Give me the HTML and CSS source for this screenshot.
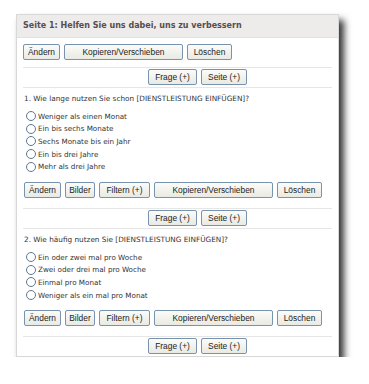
FILE: index.html
```html
<!DOCTYPE html>
<html lang="de">
<head>
  <meta charset="UTF-8" />
  <title>Umfrage bearbeiten</title>
  <link rel="stylesheet" href="styles.css">
</head>
<body>
  <div class="panel">
    <div class="page-title">Seite 1: Helfen Sie uns dabei, uns zu verbessern</div>
    <div class="page-body">
      <div class="btn-row first">
        <button class="btn w-edit">Ändern</button>
        <button class="btn w-copy">Kopieren/Verschieben</button>
        <button class="btn w-del">Löschen</button>
      </div>
      <div class="add-row">
        <button class="btn w-q">Frage (+)</button>
        <button class="btn w-p">Seite (+)</button>
      </div>

      <div class="question">
        <div class="q-text">1. Wie lange nutzen Sie schon [DIENSTLEISTUNG EINFÜGEN]?</div>
        <ul class="options">
          <li><span class="radio"></span>Weniger als einen Monat</li>
          <li><span class="radio"></span>Ein bis sechs Monate</li>
          <li><span class="radio"></span>Sechs Monate bis ein Jahr</li>
          <li><span class="radio"></span>Ein bis drei Jahre</li>
          <li><span class="radio"></span>Mehr als drei Jahre</li>
        </ul>
        <div class="btn-row">
          <button class="btn w-edit">Ändern</button>
          <button class="btn w-img">Bilder</button>
          <button class="btn w-filter">Filtern (+)</button>
          <button class="btn w-copy">Kopieren/Verschieben</button>
          <button class="btn w-del">Löschen</button>
        </div>
      </div>
      <div class="add-row">
        <button class="btn w-q">Frage (+)</button>
        <button class="btn w-p">Seite (+)</button>
      </div>

      <div class="question">
        <div class="q-text">2. Wie häufig nutzen Sie [DIENSTLEISTUNG EINFÜGEN]?</div>
        <ul class="options">
          <li><span class="radio"></span>Ein oder zwei mal pro Woche</li>
          <li><span class="radio"></span>Zwei oder drei mal pro Woche</li>
          <li><span class="radio"></span>Einmal pro Monat</li>
          <li><span class="radio"></span>Weniger als ein mal pro Monat</li>
        </ul>
        <div class="btn-row">
          <button class="btn w-edit">Ändern</button>
          <button class="btn w-img">Bilder</button>
          <button class="btn w-filter">Filtern (+)</button>
          <button class="btn w-copy">Kopieren/Verschieben</button>
          <button class="btn w-del">Löschen</button>
        </div>
      </div>
      <div class="add-row last">
        <button class="btn w-q">Frage (+)</button>
        <button class="btn w-p">Seite (+)</button>
      </div>
    </div>
  </div>
</body>
</html>
```

FILE: styles.css
```css
body {
  margin: 0;
  background: #fff;
  font-family: "DejaVu Sans", Verdana, sans-serif;
}
.panel {
  margin: 14px 0 0 16px;
  width: 321px;
  border: 1px solid #d8d8d8;
  background: #fff;
  box-shadow: 5px 6px 7px rgba(0, 0, 0, 0.8);
}
.page-title {
  height: 22px;
  line-height: 22px;
  padding-left: 6px;
  background: #eeebeb;
  border-bottom: 1px solid #e8dede;
  color: #574e4e;
  font-size: 8px;
  font-weight: bold;
}
.page-body {
  padding: 0 6px;
}
.btn-row {
  display: flex;
  gap: 4px;
  margin-top: 9px;
}
.btn-row.first {
  margin-top: 6px;
}
.btn {
  height: 16px;
  padding: 0;
  border: 1px solid #7893ad;
  border-radius: 2px;
  background: linear-gradient(#fbfbf8, #eaeae4);
  color: #1c1c1c;
  font-family: "Liberation Sans", Arial, sans-serif;
  font-size: 8.4px;
  line-height: 14px;
}
.w-edit { width: 37px; }
.w-copy { width: 119px; }
.w-del { width: 45px; }
.w-img { width: 30px; }
.w-filter { width: 51px; }
.w-q { width: 49px; }
.w-p { width: 46px; }
.add-row {
  display: flex;
  justify-content: center;
  gap: 4px;
  padding: 1px 0 2px 40px;
  margin-top: 7px;
  border-top: 1px solid #e6e6e6;
  border-bottom: 1px solid #e6e6e6;
}
.question + .add-row {
  margin-top: 10px;
}
.add-row.last {
  border-bottom: none;
  padding-bottom: 2px;
}
.question {
  padding-left: 1px;
}
.q-text {
  margin-top: 5px;
  line-height: 12px;
  font-size: 7.3px;
  color: #333;
}
.options {
  list-style: none;
  margin: 5px 0 0;
  padding: 0;
}
.options li {
  display: flex;
  align-items: center;
  height: 12.6px;
  font-size: 7.2px;
  color: #333;
}
.radio {
  width: 8px;
  height: 8px;
  margin: 0 2px 0 2px;
  border: 1px solid #5d7890;
  border-radius: 50%;
  background: #fff;
}
```
